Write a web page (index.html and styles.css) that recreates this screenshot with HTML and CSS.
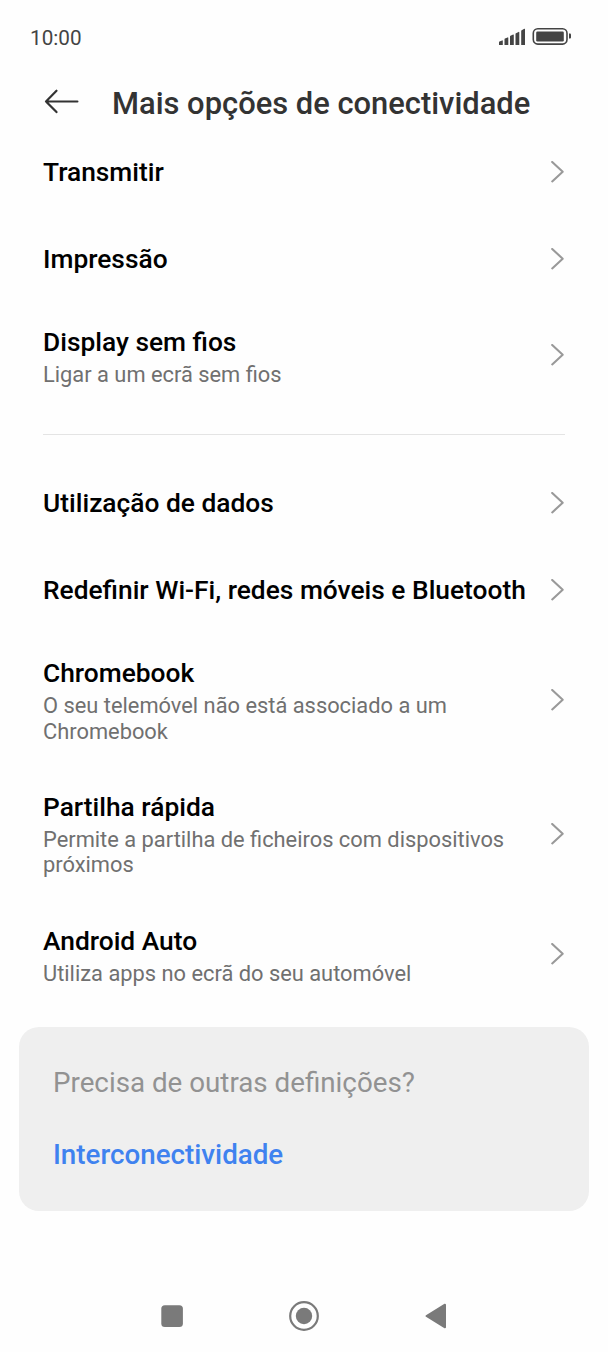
FILE: index.html
```html
<!DOCTYPE html>
<html lang="pt">
<head>
<meta charset="utf-8">
<title>Mais opções de conectividade</title>
<link rel="stylesheet" href="styles.css">
</head>
<body>
<svg class="sprite" aria-hidden="true">
  <symbol id="chevron" viewBox="0 0 14 22"><path d="M1.2 1 11.700 10.700 1.2 20.400" fill="none" stroke="currentColor" stroke-width="2.1" stroke-linejoin="round" stroke-linecap="round"/></symbol>
</svg>
<div class="screen">
  <div class="status">
    <span class="time">10:00</span>
    <svg class="indicators" width="74" height="20" viewBox="0 0 74 20">
      <g fill="#444">
        <path d="M0 18v-2.600q0-.5.5-.8l2.600-1.200q.7-.2.700.5V18zM5.500 18v-5.600q0-.5.5-.8l2.600-1.200q.7-.2.700.5V18zM11 18V9.600q0-.5.5-.8l2.600-1.200q.7-.2.700.5V18zM16.500 18V7q0-.5.5-.8l2.600-1.300q.7-.2.700.5V18zM22.200 18V4q0-.5.5-.8l2.600-1.400q.7-.2.700.5V18z"/>
        <rect x="37.200" y="4.600" width="27.600" height="9.800" rx="1.200"/>
        <path d="M70 6.500h1q1 0 1 1v3q0 1-1 1h-1z"/>
      </g>
      <rect x="34.300" y="1.700" width="33.700" height="15.400" rx="4.500" fill="none" stroke="#444" stroke-width="1.600"/>
    </svg>
  </div>
  <header class="header">
    <svg class="back" width="36" height="26" viewBox="0 0 36 26"><path d="M33.400 13.500H2M12.500 2.700 2 13.500l10.500 10.600" fill="none" stroke="#333" stroke-width="2.200" stroke-linecap="round" stroke-linejoin="round"/></svg>
    <h1 class="heading">Mais opções de conectividade</h1>
  </header>
  <main>
    <div class="row"><div class="text"><div class="title">Transmitir</div></div><svg class="chevron"><use href="#chevron"/></svg></div>
    <div class="row"><div class="text"><div class="title">Impressão</div></div><svg class="chevron"><use href="#chevron"/></svg></div>
    <div class="row two-line"><div class="text"><div class="title">Display sem fios</div><div class="summary">Ligar a um ecrã sem fios</div></div><svg class="chevron"><use href="#chevron"/></svg></div>
    <div class="divider"></div>
    <div class="row"><div class="text"><div class="title">Utilização de dados</div></div><svg class="chevron"><use href="#chevron"/></svg></div>
    <div class="row"><div class="text"><div class="title">Redefinir Wi-Fi, redes móveis e Bluetooth</div></div><svg class="chevron"><use href="#chevron"/></svg></div>
    <div class="row three-line"><div class="text"><div class="title">Chromebook</div><div class="summary">O seu telemóvel não está associado a um Chromebook</div></div><svg class="chevron"><use href="#chevron"/></svg></div>
    <div class="row three-line"><div class="text"><div class="title">Partilha rápida</div><div class="summary">Permite a partilha de ficheiros com dispositivos próximos</div></div><svg class="chevron"><use href="#chevron"/></svg></div>
    <div class="row two-line"><div class="text"><div class="title">Android Auto</div><div class="summary">Utiliza apps no ecrã do seu automóvel</div></div><svg class="chevron"><use href="#chevron"/></svg></div>
    <section class="card">
      <div class="question">Precisa de outras definições?</div>
      <a class="link">Interconectividade</a>
    </section>
  </main>
  <nav class="nav">
    <svg width="32" height="32" viewBox="0 0 32 32"><rect x="5.300" y="5.300" width="21.600" height="21.600" rx="3.500" fill="#7a7a7a"/></svg>
    <svg width="32" height="32" viewBox="0 0 32 32"><circle cx="16" cy="16" r="13.800" fill="none" stroke="#7a7a7a" stroke-width="2.200"/><circle cx="16" cy="16" r="8.200" fill="#7a7a7a"/></svg>
    <svg width="32" height="32" viewBox="0 0 32 32"><path d="M6.500 16 25 4.700v22.600z" fill="#7a7a7a" stroke="#7a7a7a" stroke-width="2" stroke-linejoin="round"/></svg>
  </nav>
</div>
</body>
</html>
```
FILE: styles.css
```css
* { box-sizing: border-box; }
body { margin: 0; background: #fefefe; font-family: Roboto, "Liberation Sans", sans-serif; }
.sprite { display: none; }
.screen { width: 608px; height: 1352px; display: flex; flex-direction: column; }
.status { height: 74px; padding: 0 35px 0 30px; display: flex; align-items: center; justify-content: space-between; }
.time { font-size: 20.7px; color: #444; font-weight: 450; padding-top: 2px; }
.indicators { display: block; }
.header { height: 54.500px; padding: 0 44px; display: flex; align-items: center; gap: 32px; }
.back { flex: none; }
.heading { margin: 5px 0 0; font-size: 30.9px; line-height: 38px; font-weight: 500; color: #333; white-space: nowrap; }
.row { height: 86.700px; padding: 0 43px; display: flex; align-items: center; justify-content: space-between; }
.two-line { height: 107px; }
.three-line { height: 133.700px; }
.three-line + .three-line { height: 133.900px; }
.text { width: 490px; }
.title { font-size: 26.340px; line-height: 32px; font-weight: 500; color: #000; white-space: nowrap; }
.two-line .text { padding-top: 2px; }
.three-line .text { padding-top: 1px; }
.summary { max-width: 470px; margin-top: 4px; font-size: 21.850px; line-height: 25.200px; color: #707070; }
.chevron { flex: none; width: 14px; height: 22px; color: #999; }
.divider { height: 1px; margin: 25px 43px; background: #e4e4e4; }
.card { height: 184px; margin: 19px 19px 0; padding: 38px 34px; border-radius: 20px; background: #efefef; display: flex; flex-direction: column; gap: 36px; }
.question { font-size: 27.750px; line-height: 36px; color: #929292; }
.link { font-size: 27.750px; line-height: 36px; font-weight: 500; color: #3f82ef; }
.nav { height: 72px; margin-top: auto; padding: 0 156px; display: flex; align-items: center; justify-content: space-between; }
```
